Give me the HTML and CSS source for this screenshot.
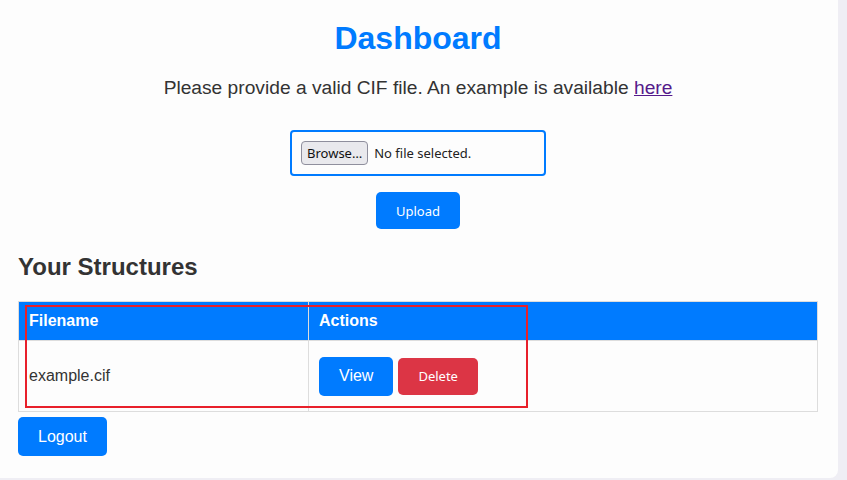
FILE: index.html
```html
<!DOCTYPE html>
<html lang="en">
<head>
<meta charset="utf-8">
<title>Dashboard</title>
<link rel="stylesheet" href="styles.css">
</head>
<body>
<div class="card">
  <h1 class="title">Dashboard</h1>
  <p class="lead">Please provide a valid CIF file. An example is available <a class="link" href="#">here</a></p>
  <form class="upload-form">
    <div class="file-box">
      <span class="browse">Browse…</span>
      <span class="file-status">No file selected.</span>
    </div>
    <button type="button" class="btn btn-primary btn-sys">Upload</button>
  </form>
  <h2 class="section-title">Your Structures</h2>
  <table class="structures">
    <thead>
      <tr><th class="col-name">Filename</th><th>Actions</th></tr>
    </thead>
    <tbody>
      <tr>
        <td>example.cif</td>
        <td>
          <div class="actions">
            <button type="button" class="btn btn-primary btn-lg">View</button>
            <button type="button" class="btn btn-danger btn-sys">Delete</button>
          </div>
        </td>
      </tr>
    </tbody>
  </table>
  <button type="button" class="btn btn-primary btn-lg logout">Logout</button>
  <div class="highlight"></div>
</div>
</body>
</html>
```

FILE: styles.css
```css
html, body {
  margin: 0;
  padding: 0;
  background: #efeef4;
  font-family: "Liberation Sans", Arial, sans-serif;
  color: #333;
}

.card {
  position: relative;
  box-sizing: border-box;
  width: 838px;
  height: 478px;
  background: #fdfdfd;
  border-radius: 0 0 8px 0;
  padding: 20px 20px 0 18px;
}

.title {
  margin: 0 0 19px;
  font-size: 32px;
  font-weight: bold;
  color: #007bff;
  text-align: center;
  line-height: normal;
}

.lead {
  margin: 0;
  font-size: 19.2px;
  line-height: 23px;
  text-align: center;
  color: #333;
}

.link {
  color: #551a8b;
  text-decoration: underline;
}

.upload-form {
  display: flex;
  flex-direction: column;
  align-items: center;
  margin-top: 31px;
  gap: 16px;
}

.file-box {
  box-sizing: border-box;
  width: 256px;
  height: 46px;
  border: 2px solid #007bff;
  border-radius: 4px;
  padding: 0 9px;
  display: flex;
  align-items: center;
  gap: 6px;
  font-family: "Noto Sans", sans-serif;
  font-size: 13px;
  color: #222;
}

.browse {
  box-sizing: border-box;
  height: 24px;
  padding: 0 5px;
  display: inline-flex;
  align-items: center;
  background: #e9e9ed;
  border: 1px solid #8f8f9d;
  border-radius: 4px;
  color: #111;
}

.btn {
  border: none;
  border-radius: 5px;
  color: #fff;
  cursor: pointer;
  padding: 0 20px;
}

.btn-primary { background: #007bff; }
.btn-danger { background: #dc3545; }

.btn-sys {
  font-family: "Noto Sans", sans-serif;
  font-size: 13px;
  height: 37px;
}

.btn-lg {
  font-family: "Liberation Sans", Arial, sans-serif;
  font-size: 16px;
  height: 39px;
}

.section-title {
  margin: 24px 0 20px;
  font-size: 24px;
  font-weight: bold;
  color: #333;
  line-height: normal;
}

.structures {
  width: 800px;
  table-layout: fixed;
  border-collapse: collapse;
  border: 1px solid #ddd;
  font-size: 16px;
}

.structures th {
  background: #007bff;
  color: #fff;
  text-align: left;
  font-weight: bold;
  height: 39px;
  padding: 0 10px;
  box-sizing: border-box;
  border-left: 1px solid #ddd;
  border-bottom: 1px solid #ddd;
}

.structures td {
  padding: 0 10px;
  height: 70px;
  border-left: 1px solid #ddd;
  color: #333;
}

.structures .col-name {
  width: 290px;
}

.actions {
  display: flex;
  align-items: center;
  gap: 5px;
}

.logout {
  margin-top: 5px;
  display: block;
}

.highlight {
  position: absolute;
  left: 25px;
  top: 305px;
  width: 503px;
  height: 103px;
  box-sizing: border-box;
  border: 2px solid #e8202a;
  pointer-events: none;
}
```
